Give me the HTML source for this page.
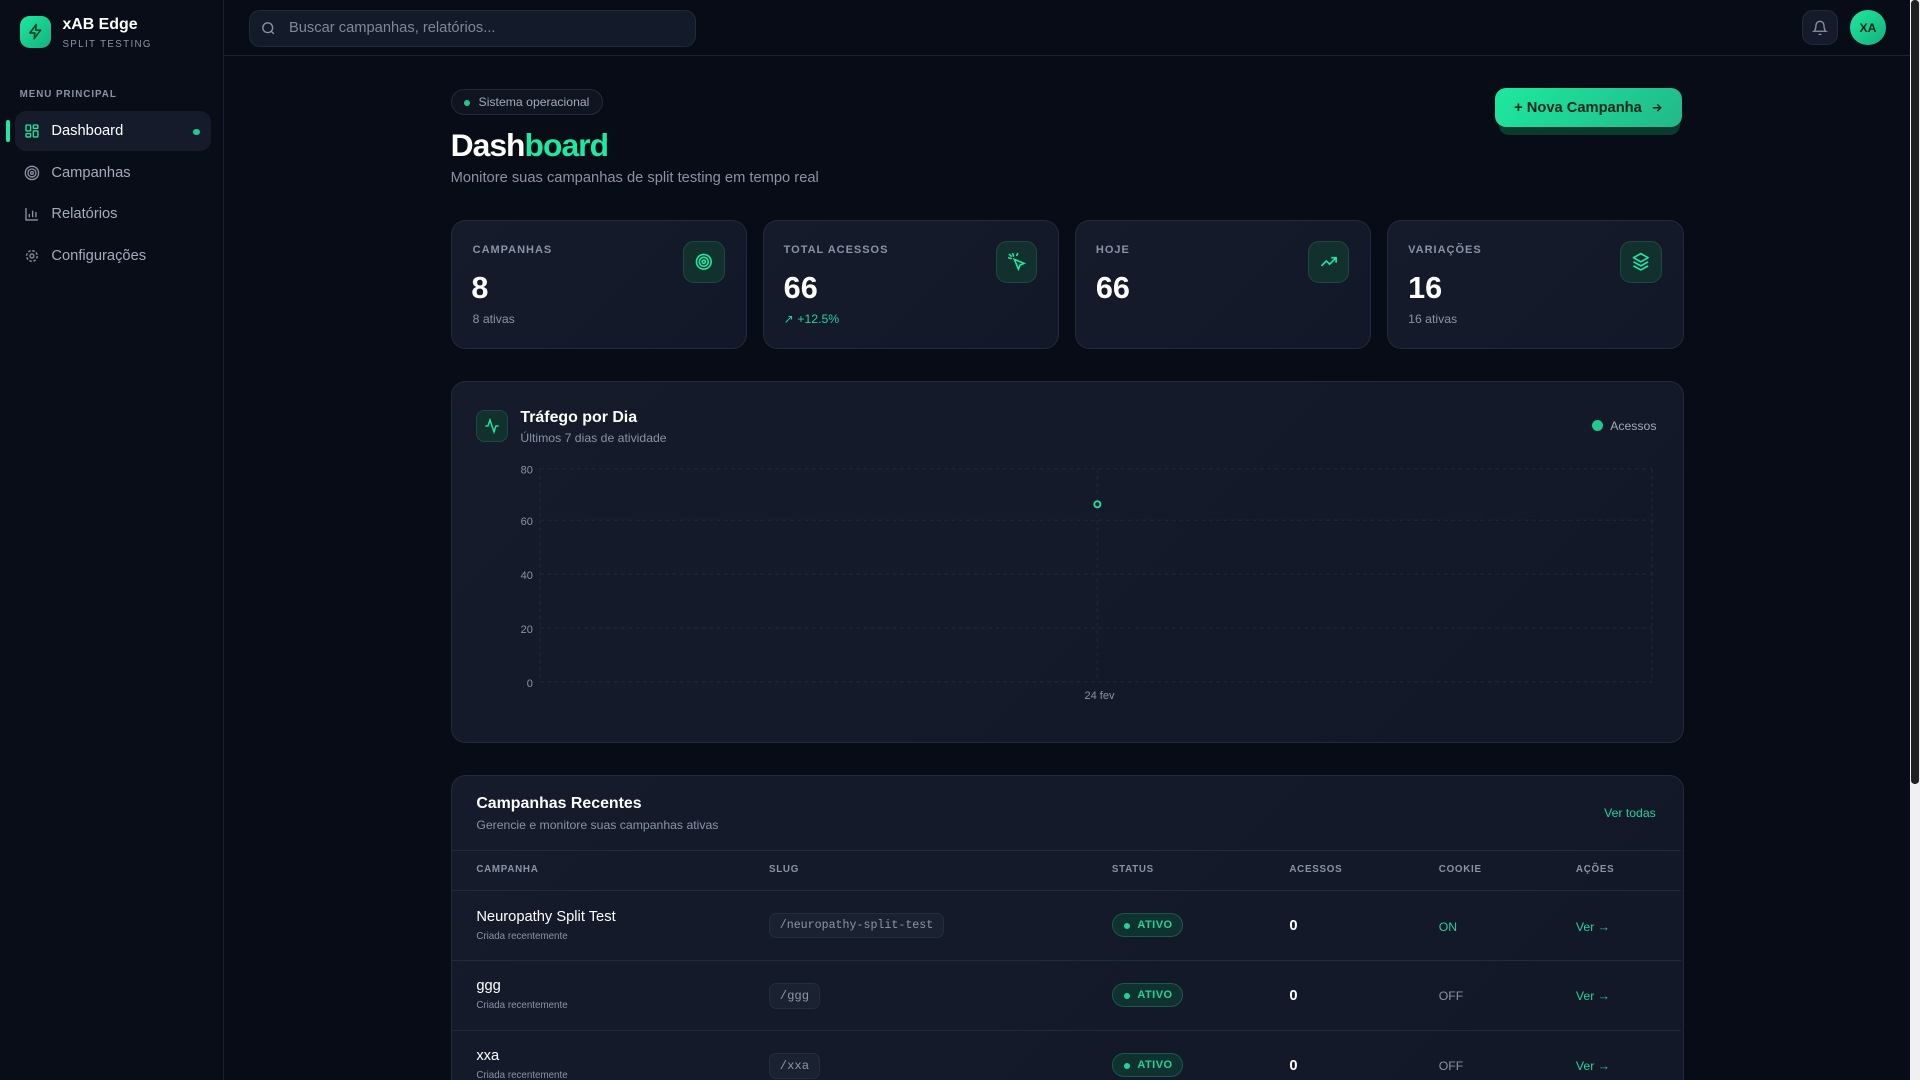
<!DOCTYPE html>
<html><head><meta charset="utf-8"><style>
html{zoom:1.22449;overflow:hidden;height:882px}
*{box-sizing:border-box;margin:0;padding:0}
body{width:1568px;height:882px;overflow:hidden;background:#080c16;font-family:"Liberation Sans",sans-serif;color:#e6e9ef;position:relative}
.abs{position:absolute}
.side{left:0;top:0;width:183px;height:882px;background:#090d18;border-right:1px solid #1a2030}
.hdr{left:183px;top:0;width:1377px;height:46px;border-bottom:1px solid #1c2233;background:#080c16}
.card{background:linear-gradient(135deg,#151b2b,#121827);border:1px solid #222a3b;border-radius:12px}
.lbl{font-size:9px;letter-spacing:.8px;color:#8a93a6;font-weight:bold}
.num{font-size:25px;font-weight:bold;color:#fff}
.ibox{width:34px;height:34px;border-radius:9px;background:#12302e;border:1px solid #1c4a40;display:flex;align-items:center;justify-content:center}
.nav{left:12px;width:160px;height:32px;border-radius:9px;display:flex;align-items:center;padding-left:8px;font-size:12px;color:#a3abbb}
.nav svg{margin-right:9px}
.th{font-size:8px;letter-spacing:.6px;color:#8a93a6;font-weight:bold}
.row{left:369px;width:1004px;height:57px;border-top:1px solid #222a3b}
.slug{font-family:"Liberation Mono",monospace;font-size:10px;color:#8d95a6;background:#1a2131;border:1px solid #252d3e;border-radius:6px;padding:4px 8px}
.badge{font-size:9px;color:#22d39a;background:#0f3230;border:1px solid #1a5a48;border-radius:10px;padding:4px 8px 4px 20px;font-weight:bold;letter-spacing:.4px}
.badge:before{content:"";position:absolute;left:9px;top:7px;width:5px;height:5px;border-radius:50%;background:#22d39a}
.g{color:#22d39a}
</style></head><body>
<div class="abs side"></div>
<div class="abs" style="left:16px;top:13px;width:26px;height:26px;border-radius:8px;background:linear-gradient(135deg,#1de9a0,#15b07c);display:flex;align-items:center;justify-content:center"><svg width="14" height="14" viewBox="0 0 24 24" fill="none" stroke="#083b2c" stroke-width="2.2" stroke-linejoin="round"><path d="M13 2L4 14h7l-1 8 9-12h-7z"/></svg></div>
<div class="abs" style="left:51px;top:13px;font-size:13px;font-weight:bold;color:#fff">xAB Edge</div>
<div class="abs" style="left:51px;top:32px;font-size:8px;letter-spacing:1.1px;color:#8a93a6">SPLIT TESTING</div>
<div class="abs" style="left:16px;top:73px;font-size:8px;letter-spacing:.8px;color:#8a93a6;font-weight:bold">MENU PRINCIPAL</div>
<div class="abs" style="left:5px;top:98px;width:3px;height:18px;border-radius:2px;background:#1de9a0"></div>
<div class="abs nav" style="top:91px;background:#151b2a;color:#fff"><svg width="13" height="13" viewBox="0 0 24 24" fill="none" stroke="#1de9a0" stroke-width="2"><rect x="3" y="3" width="7" height="9" rx="1"/><rect x="14" y="3" width="7" height="5" rx="1"/><rect x="14" y="12" width="7" height="9" rx="1"/><rect x="3" y="16" width="7" height="5" rx="1"/></svg>Dashboard<span style="position:absolute;left:146px;top:14px;width:5px;height:5px;border-radius:50%;background:#1fc98f"></span></div>
<div class="abs nav" style="top:125px"><svg width="13" height="13" viewBox="0 0 24 24" fill="none" stroke="#8a93a6" stroke-width="2"><circle cx="12" cy="12" r="10"/><circle cx="12" cy="12" r="6"/><circle cx="12" cy="12" r="2"/></svg>Campanhas</div>
<div class="abs nav" style="top:159px"><svg width="13" height="13" viewBox="0 0 24 24" fill="none" stroke="#8a93a6" stroke-width="2"><path d="M3 3v18h18M8 17v-5M13 17V7M18 17v-8"/></svg>Relatórios</div>
<div class="abs nav" style="top:193px"><svg width="13" height="13" viewBox="0 0 24 24" fill="none" stroke="#8a93a6" stroke-width="2"><circle cx="12" cy="12" r="3"/><circle cx="12" cy="12" r="8" stroke-dasharray="4 2.3"/></svg>Configurações</div>

<div class="abs hdr"></div>
<div class="abs" style="left:203px;top:8px;width:365px;height:30px;border-radius:9px;background:#131a29;border:1px solid #222a3b"></div>
<svg class="abs" style="left:213px;top:17px" width="12" height="12" viewBox="0 0 24 24" fill="none" stroke="#8a93a6" stroke-width="2.2"><circle cx="11" cy="11" r="8"/><path d="M21 21l-4.3-4.3"/></svg>
<div class="abs" style="left:236px;top:16px;font-size:12px;color:#7f889a">Buscar campanhas, relatórios...</div>
<div class="abs" style="left:1472px;top:8px;width:29px;height:29px;border-radius:9px;background:#151b2a;border:1px solid #222a3b;display:flex;align-items:center;justify-content:center"><svg width="13" height="13" viewBox="0 0 24 24" fill="none" stroke="#8a93a6" stroke-width="2"><path d="M6 8a6 6 0 0112 0c0 7 3 9 3 9H3s3-2 3-9M10.3 21a1.9 1.9 0 003.4 0"/></svg></div>
<div class="abs" style="left:1511px;top:8px;width:29px;height:29px;border-radius:50%;background:linear-gradient(135deg,#1de9a0,#15b07c);display:flex;align-items:center;justify-content:center;font-size:10px;font-weight:bold;color:#06261c">XA</div>
<div class="abs" style="left:1560px;top:0;width:8px;height:882px;background:#f0f0f0"></div>
<div class="abs" style="left:1561px;top:0;width:6px;height:640px;background:#202020;border-radius:3px"></div>

<div class="abs" style="left:368px;top:73px;height:21px;padding:0 10px 0 22px;border-radius:11px;border:1px solid #222a3b;background:#0f1420;font-size:10px;color:#a3abbb;line-height:20px">Sistema operacional<span style="position:absolute;left:10px;top:8px;width:5px;height:5px;border-radius:50%;background:#1fc98f"></span></div>
<div class="abs" style="left:368px;top:104px;font-size:26px;font-weight:bold;letter-spacing:-.8px;color:#fff">Dash<span class="g" style="color:#1de9a0">board</span></div>
<div class="abs" style="left:368px;top:139px;font-size:12px;color:#8a93a6">Monitore suas campanhas de split testing em tempo real</div>
<div class="abs" style="left:1224px;top:96px;width:148px;height:14px;border-radius:0 0 8px 8px;background:#0d3a2e"></div>
<div class="abs" style="left:1221px;top:72px;width:153px;height:32px;border-radius:9px;background:linear-gradient(135deg,#1de9a0,#22b888);display:flex;align-items:center;justify-content:center;font-size:12px;font-weight:bold;color:#06261c">+ Nova Campanha &nbsp;<svg width="11" height="11" viewBox="0 0 24 24" fill="none" stroke="#06261c" stroke-width="2.6"><path d="M5 12h14M13 6l6 6-6 6"/></svg></div>

<div class="abs card" style="left:368px;top:180px;width:242px;height:105px"></div>
<div class="abs card" style="left:623px;top:180px;width:242px;height:105px"></div>
<div class="abs card" style="left:878px;top:180px;width:242px;height:105px"></div>
<div class="abs card" style="left:1133px;top:180px;width:242px;height:105px"></div>
<div class="abs lbl" style="left:386px;top:199px">CAMPANHAS</div>
<div class="abs lbl" style="left:640px;top:199px">TOTAL ACESSOS</div>
<div class="abs lbl" style="left:895px;top:199px">HOJE</div>
<div class="abs lbl" style="left:1150px;top:199px">VARIAÇÕES</div>
<div class="abs num" style="left:385px;top:221px">8</div>
<div class="abs num" style="left:640px;top:221px">66</div>
<div class="abs num" style="left:895px;top:221px">66</div>
<div class="abs num" style="left:1150px;top:221px">16</div>
<div class="abs" style="left:386px;top:255px;font-size:10px;color:#8a93a6">8 ativas</div>
<div class="abs g" style="left:640px;top:255px;font-size:10px">↗ +12.5%</div>
<div class="abs" style="left:1150px;top:255px;font-size:10px;color:#8a93a6">16 ativas</div>
<div class="abs ibox" style="left:558px;top:197px"><svg width="16" height="16" viewBox="0 0 24 24" fill="none" stroke="#1de9a0" stroke-width="2"><circle cx="12" cy="12" r="9"/><circle cx="12" cy="12" r="5.5"/><circle cx="12" cy="12" r="2"/></svg></div>
<div class="abs ibox" style="left:813px;top:197px"><svg width="16" height="16" viewBox="0 0 24 24" fill="none" stroke="#1de9a0" stroke-width="2" stroke-linecap="round"><path d="M9 9l5 12 2-5 5-2z"/><path d="M7.2 2.2L8 5M2.2 7.2L5 8M5.1 5.1L3 3M12 4l1-2"/></svg></div>
<div class="abs ibox" style="left:1068px;top:197px"><svg width="16" height="16" viewBox="0 0 24 24" fill="none" stroke="#1de9a0" stroke-width="2"><path d="M3 17l6-6 4 4 8-8M15 7h6v6"/></svg></div>
<div class="abs ibox" style="left:1323px;top:197px"><svg width="16" height="16" viewBox="0 0 24 24" fill="none" stroke="#1de9a0" stroke-width="2" stroke-linejoin="round"><path d="M12 2l9 5-9 5-9-5z"/><path d="M3 12l9 5 9-5M3 17l9 5 9-5"/></svg></div>

<div class="abs card" style="left:368px;top:311px;width:1007px;height:296px"></div>
<div class="abs ibox" style="left:389px;top:335px;width:26px;height:26px;border-radius:7px"><svg width="13" height="13" viewBox="0 0 24 24" fill="none" stroke="#1de9a0" stroke-width="2.2"><path d="M22 12h-4l-3 9L9 3l-3 9H2"/></svg></div>
<div class="abs" style="left:425px;top:334px;font-size:13px;font-weight:bold;color:#fff">Tráfego por Dia</div>
<div class="abs" style="left:425px;top:352px;font-size:10px;color:#8a93a6">Últimos 7 dias de atividade</div>
<div class="abs" style="left:1300px;top:343px;width:9px;height:9px;border-radius:50%;background:#1fc98f"></div>
<div class="abs" style="left:1315px;top:342px;font-size:10px;color:#a3abbb">Acessos</div>
<svg class="abs" style="left:400px;top:375px" width="960" height="205">
<g stroke="#1f2636" stroke-dasharray="3 3" stroke-width="1"><line x1="41" y1="8" x2="949" y2="8"/><line x1="41" y1="50" x2="949" y2="50"/><line x1="41" y1="94" x2="949" y2="94"/><line x1="41" y1="138" x2="949" y2="138"/><line x1="41" y1="182" x2="949" y2="182"/><line x1="41" y1="8" x2="41" y2="182"/><line x1="949" y1="8" x2="949" y2="182"/><line x1="496" y1="8" x2="496" y2="182"/></g>
<g font-size="9" fill="#8a93a6" text-anchor="end" font-family="Liberation Sans"><text x="35" y="12">80</text><text x="35" y="54">60</text><text x="35" y="98">40</text><text x="35" y="142">20</text><text x="35" y="186">0</text><text x="510" y="196">24 fev</text></g>
<circle cx="496" cy="37" r="2.5" fill="#121827" stroke="#1de9a0" stroke-width="1.5"/>
</svg>

<div class="abs card" style="left:368px;top:633px;width:1007px;height:262px;border-radius:12px"></div>
<div class="abs" style="left:389px;top:649px;font-size:13px;font-weight:bold;color:#fff">Campanhas Recentes</div>
<div class="abs" style="left:389px;top:668px;font-size:10px;color:#8a93a6">Gerencie e monitore suas campanhas ativas</div>
<div class="abs g" style="left:1310px;top:658px;font-size:10px">Ver todas</div>
<div class="abs" style="left:369px;top:694px;width:1004px;border-top:1px solid #222a3b"></div>
<div class="abs th" style="left:389px;top:706px">CAMPANHA</div>
<div class="abs th" style="left:628px;top:706px">SLUG</div>
<div class="abs th" style="left:908px;top:706px">STATUS</div>
<div class="abs th" style="left:1053px;top:706px">ACESSOS</div>
<div class="abs th" style="left:1175px;top:706px">COOKIE</div>
<div class="abs th" style="left:1287px;top:706px">AÇÕES</div>

<div class="abs row" style="top:727px"></div>
<div class="abs row" style="top:784px"></div>
<div class="abs row" style="top:841px"></div>

<div class="abs" style="left:389px;top:742px;font-size:12px;color:#fff">Neuropathy Split Test</div>
<div class="abs" style="left:389px;top:760px;font-size:8px;color:#8a93a6">Criada recentemente</div>
<div class="abs slug" style="left:628px;top:746px;font-size:9.5px">/neuropathy-split-test</div>
<div class="abs badge" style="left:908px;top:746px">ATIVO</div>
<div class="abs" style="left:1053px;top:750px;font-size:12px;font-weight:bold;color:#fff">0</div>
<div class="abs g" style="left:1175px;top:751px;font-size:10px">ON</div>
<div class="abs g" style="left:1287px;top:751px;font-size:10px">Ver →</div>

<div class="abs" style="left:389px;top:799px;font-size:12px;color:#fff">ggg</div>
<div class="abs" style="left:389px;top:817px;font-size:8px;color:#8a93a6">Criada recentemente</div>
<div class="abs slug" style="left:628px;top:803px">/ggg</div>
<div class="abs badge" style="left:908px;top:803px">ATIVO</div>
<div class="abs" style="left:1053px;top:807px;font-size:12px;font-weight:bold;color:#fff">0</div>
<div class="abs" style="left:1175px;top:808px;font-size:10px;color:#8a93a6">OFF</div>
<div class="abs g" style="left:1287px;top:808px;font-size:10px">Ver →</div>

<div class="abs" style="left:389px;top:856px;font-size:12px;color:#fff">xxa</div>
<div class="abs" style="left:389px;top:874px;font-size:8px;color:#8a93a6">Criada recentemente</div>
<div class="abs slug" style="left:628px;top:860px">/xxa</div>
<div class="abs badge" style="left:908px;top:860px">ATIVO</div>
<div class="abs" style="left:1053px;top:864px;font-size:12px;font-weight:bold;color:#fff">0</div>
<div class="abs" style="left:1175px;top:865px;font-size:10px;color:#8a93a6">OFF</div>
<div class="abs g" style="left:1287px;top:865px;font-size:10px">Ver →</div>
</body></html>
